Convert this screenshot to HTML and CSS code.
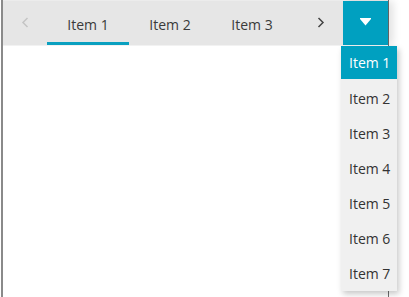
FILE: index.html
```html
<!DOCTYPE html>
<html>
<head>
<meta charset="utf-8">
<link rel="stylesheet" href="styles.css">
</head>
<body>
<div class="frame">
  <div class="strip">
    <div class="nav nav-left">
      <svg width="8" height="11" viewBox="0 0 8 11"><path d="M6.5 1 L2 5.5 L6.5 10" fill="none" stroke="#c4c4c4" stroke-width="1.5"/></svg>
    </div>
    <div class="tabs">
      <div class="tab active">Item 1</div>
      <div class="tab">Item 2</div>
      <div class="tab">Item 3</div>
    </div>
    <div class="nav nav-right">
      <svg width="8" height="11" viewBox="0 0 8 11"><path d="M1.5 1 L6 5.5 L1.5 10" fill="none" stroke="#444" stroke-width="1.5"/></svg>
    </div>
    <div class="drop">
      <svg width="11" height="8" viewBox="0 0 11 8"><path d="M0 0 H11 V1 L5.5 7.5 L0 1 Z" fill="#fff"/></svg>
    </div>
  </div>
  <div class="content"></div>
  <ul class="menu">
    <li class="sel">Item 1</li>
    <li>Item 2</li>
    <li>Item 3</li>
    <li>Item 4</li>
    <li>Item 5</li>
    <li>Item 6</li>
    <li>Item 7</li>
  </ul>
</div>
</body>
</html>
```
FILE: styles.css
```css
html, body {
  margin: 0;
  padding: 0;
  background: #fff;
}
body {
  font-family: "Open Sans", "Noto Sans", sans-serif;
  font-size: 14px;
  color: #333;
  width: 409px;
  height: 297px;
  overflow: hidden;
}
.frame {
  position: relative;
  margin-left: 1px;
  width: 385px;
  height: 297px;
  border-left: 2px solid #8a8a8a;
  border-right: 1px solid #6e6e6e;
  display: flex;
  flex-direction: column;
}
.strip {
  height: 45px;
  background: #e6e6e6;
  border-top: 1px solid #ececec;
  display: flex;
  align-items: stretch;
  box-sizing: border-box;
}
.nav {
  width: 44px;
  display: flex;
  align-items: center;
  justify-content: center;
  padding-bottom: 1px;
}
.tabs {
  flex: 1;
  display: flex;
}
.tab {
  width: 82px;
  display: flex;
  align-items: center;
  justify-content: center;
  color: #3a3a3a;
  box-sizing: border-box;
  padding-top: 2px;
}
.tab.active {
  border-bottom: 3px solid #0aa0c0;
  padding-top: 5px;
}
.drop {
  width: 45px;
  background: #00a0c0;
  display: flex;
  align-items: center;
  justify-content: center;
  box-shadow: 5px 0 8px rgba(0,0,0,0.12);
}
.drop svg { margin-top: -2px; }
.content {
  flex: 1;
  background: #fff;
  border-top: 1px solid #f2f2f2;
}
.menu {
  position: absolute;
  left: 338px;
  top: 46px;
  width: 56px;
  margin: 0;
  padding: 0;
  list-style: none;
  background: #f0f0f0;
  box-shadow: 2px 3px 6px rgba(0,0,0,0.22);
}
.menu li {
  height: 35px;
  line-height: 35px;
  padding-left: 8px;
  color: #333;
}
.menu li.sel {
  background: #00a0c0;
  color: #fff;
  height: 33px;
  line-height: 34px;
  margin-bottom: 2px;
}
```
